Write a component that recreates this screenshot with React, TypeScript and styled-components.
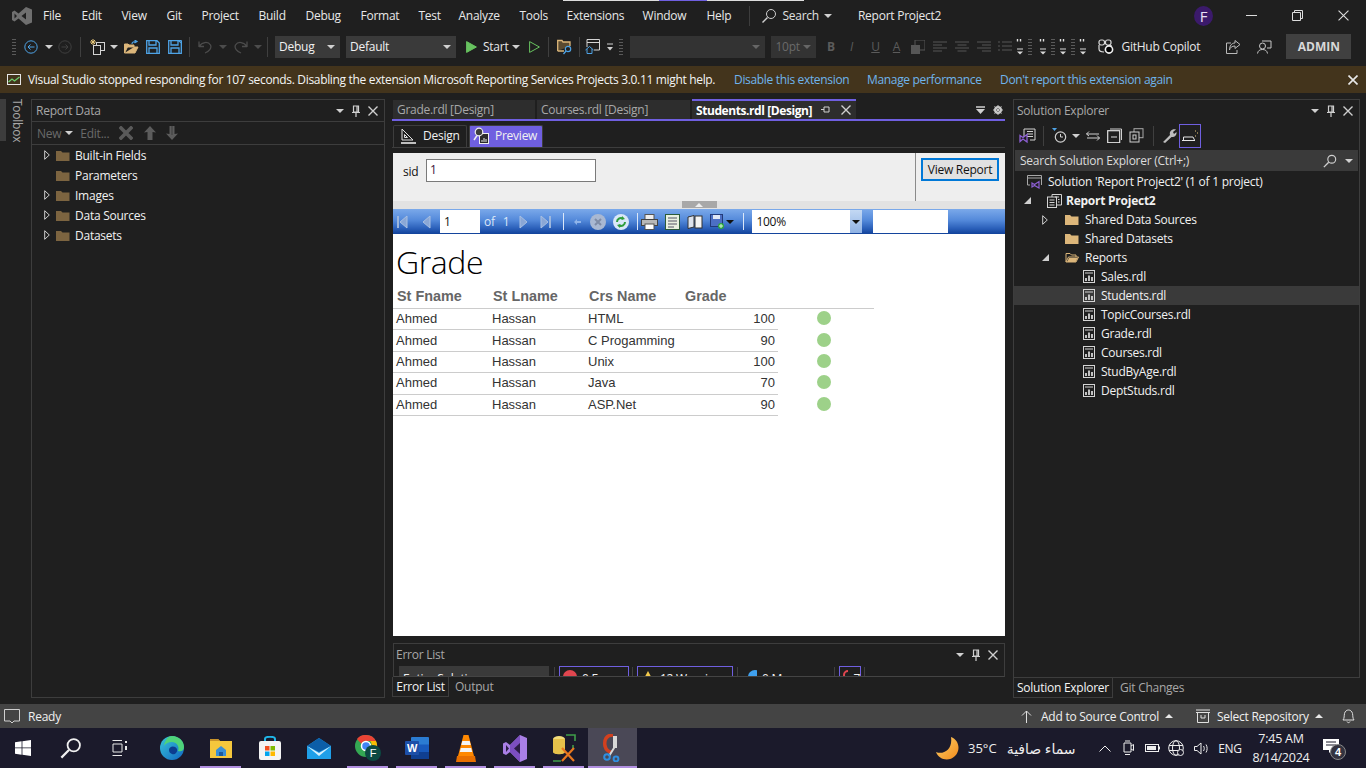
import React from 'react';
import styled, { createGlobalStyle } from 'styled-components';

const UI_FONT = `"Open Sans", "Noto Sans", "DejaVu Sans", sans-serif`;
const PANEL_LINE = '#3d3d3d';
const ACCENT = '#6f5fe0';

const GlobalStyle = createGlobalStyle`
    html, body { margin: 0; padding: 0; background: #1f1f1f; }
    * { box-sizing: border-box; }
    body { font-family: ${UI_FONT}; font-size: 12px; letter-spacing: -0.25px; color: #f1f1f1; }
`;

const Page = styled.div`
    width: 1366px;
    height: 768px;
    overflow: hidden;
    display: flex;
    flex-direction: column;
    position: relative;
    background: #1f1f1f;
`;

const GlitchStrip = styled.div`
    position: absolute;
    top: 0;
    left: 563px;
    width: 241px;
    height: 1px;
    background: linear-gradient(90deg, #ddd 0 96px, ${ACCENT} 96px 144px, #ddd 144px);
`;

/* generic fixed slot used by toolbars, centres whatever icon is in it */
const Slot = styled.div<{ $w: number; $ml?: number }>`
    width: ${p => p.$w}px;
    margin-left: ${p => p.$ml ?? 0}px;
    flex: none;
    display: flex;
    align-items: center;
    justify-content: center;
`;

/* title bar */
const TitleBar = styled.div`
    height: 31px;
    flex: none;
    display: flex;
    align-items: center;
`;

const LogoSlot = styled.div`
    width: 44px;
    padding-left: 12px;
    display: flex;
    align-items: center;
`;

const MenuItem = styled.div<{ $w: number }>`
    width: ${p => p.$w}px;
    margin-right: 20px;
    flex: none;
    text-align: center;
    white-space: nowrap;
    color: #e8e8e8;
`;

const TitleDivider = styled.div`
    width: 1px;
    height: 20px;
    margin: 0 9px 0 -2px;
    background: #3d3d3d;
`;

const SearchLabel = styled.span`
    margin: 0 2px 0 3px;
    color: #e0e0e0;
`;

const ProjectName = styled.div`
    margin-left: 23px;
    width: 250px;
    white-space: nowrap;
    color: #e8e8e8;
`;

const Avatar = styled.div`
    width: 20px;
    height: 20px;
    margin-left: 98px;
    border-radius: 50%;
    background: #3b1a6b;
    color: #e8e0f4;
    font-size: 15px;
    line-height: 20px;
    text-align: center;
`;

const WindowButtons = styled.div`
    margin-left: 15px;
    display: flex;
`;

/* toolbar */
const ToolBar = styled.div`
    height: 35px;
    padding: 0 0 4px 12px;
    flex: none;
    display: flex;
    align-items: center;
`;

const Grip = styled.div`
    width: 4px;
    height: 17px;
    flex: none;
    background-image: radial-gradient(#5a5a5a 0.7px, transparent 0.8px);
    background-size: 2px 3px;
`;

const Separator = styled.div`
    width: 1px;
    height: 20px;
    background: #3f3f3f;
`;

const Combo = styled.div<{ $w: number; $ml: number; $dim?: boolean }>`
    width: ${p => p.$w}px;
    margin-left: ${p => p.$ml}px;
    height: 22px;
    padding: 0 5px 0 4px;
    flex: none;
    display: flex;
    align-items: center;
    justify-content: space-between;
    background: ${p => (p.$dim ? '#333' : '#3a3a3a')};
    color: ${p => (p.$dim ? '#6a6a6a' : '#f1f1f1')};
`;

const FormatLetter = styled.span<{ $bold?: boolean; $italic?: boolean; $under?: boolean }>`
    color: #5b5b5b;
    font-weight: ${p => (p.$bold ? 700 : 400)};
    font-style: ${p => (p.$italic ? 'italic' : 'normal')};
    text-decoration: ${p => (p.$under ? 'underline' : 'none')};
`;

const ToolText = styled.span<{ $ml?: number; $tone?: string }>`
    margin-left: ${p => p.$ml ?? 0}px;
    white-space: nowrap;
    color: ${p => p.$tone ?? '#e8e8e8'};
`;

const AdminButton = styled.div`
    width: 65px;
    height: 25px;
    margin-left: 12px;
    background: #404040;
    color: #d8d8d8;
    font-weight: 700;
    text-align: center;
    line-height: 25px;
    letter-spacing: 0;
`;

/* info bar */
const InfoBar = styled.div`
    height: 27px;
    padding-left: 7px;
    flex: none;
    display: flex;
    align-items: center;
    background: #43341c;
    letter-spacing: -0.33px;
`;

const InfoText = styled.div`
    width: 706px;
    margin-left: 7px;
    white-space: nowrap;
    color: #f4f4f4;
`;

const InfoLink = styled.div<{ $w: number }>`
    width: ${p => p.$w}px;
    white-space: nowrap;
    color: #6fb5ec;
`;

const InfoClose = styled.div`
    margin-left: 169px;
    display: flex;
`;

/* main area */
const Main = styled.div`
    flex: 1;
    min-height: 0;
    display: flex;
    padding: 6px 0 6px;
`;

const Rail = styled.div`
    width: 31px;
    flex: none;
    position: relative;
    display: flex;
`;

const RailMark = styled.div`
    width: 6px;
    height: 42px;
    background: #3d3d3d;
`;

const RailLabel = styled.div`
    margin-left: 3px;
    writing-mode: vertical-rl;
    color: #a8a8a8;
    height: 42px;
`;

const ToolPanel = styled.div<{ $w: number; $ml: number }>`
    width: ${p => p.$w}px;
    margin-left: ${p => p.$ml}px;
    flex: none;
    display: flex;
    flex-direction: column;
`;

const PanelBody = styled.div`
    flex: 1;
    min-height: 0;
    display: flex;
    flex-direction: column;
    border: 1px solid ${PANEL_LINE};
`;

const PanelTitle = styled.div<{ $left?: number }>`
    height: 21px;
    padding: 0 6px 0 ${p => p.$left ?? 4}px;
    flex: none;
    display: flex;
    align-items: center;
    justify-content: space-between;
    color: #a8a8a8;
`;

const PanelActions = styled.div<{ $gap?: number }>`
    display: flex;
    align-items: center;
    gap: ${p => p.$gap ?? 8}px;
`;

const DataToolbar = styled.div`
    height: 24px;
    padding-left: 5px;
    flex: none;
    display: flex;
    align-items: center;
    border-top: 1px solid ${PANEL_LINE};
    border-bottom: 1px solid ${PANEL_LINE};
    color: #6a6a6a;
`;

const TreeList = styled.div<{ $top: number }>`
    padding-top: ${p => p.$top}px;
`;

const DataRow = styled.div`
    height: 20px;
    padding-left: 8px;
    display: flex;
    align-items: center;
    color: #f1f1f1;
`;

const ExpandSlot = styled.div`
    width: 14px;
    display: flex;
    justify-content: center;
`;

const RowLabel = styled.span<{ $bold?: boolean; $ml?: number }>`
    margin-left: ${p => p.$ml ?? 6}px;
    white-space: nowrap;
    font-weight: ${p => (p.$bold ? 700 : 400)};
`;

/* center column */
const CenterColumn = styled.div`
    width: 613px;
    margin-left: 7px;
    flex: none;
    display: flex;
    flex-direction: column;
`;

const DocTabs = styled.div`
    height: 22px;
    flex: none;
    display: flex;
    align-items: flex-end;
    padding-left: 1px;
    border-bottom: 2px solid ${ACCENT};
    position: relative;
`;

const DocTab = styled.div<{ $w: number; $active?: boolean }>`
    width: ${p => p.$w}px;
    height: ${p => (p.$active ? 20 : 19)}px;
    margin-right: 2px;
    padding: 0 5px 0 4px;
    flex: none;
    display: flex;
    align-items: center;
    justify-content: space-between;
    white-space: nowrap;
    background: #2d2d2d;
    color: ${p => (p.$active ? '#fff' : '#a8a8a8')};
    font-weight: ${p => (p.$active ? 700 : 400)};
    letter-spacing: ${p => (p.$active ? -0.42 : -0.28)}px;
    border-top: ${p => (p.$active ? `2px solid ${ACCENT}` : 'none')};
`;

const DocTabTools = styled.div`
    margin-left: auto;
    padding-right: 2px;
    height: 19px;
    display: flex;
    align-items: center;
    gap: 8px;
`;

const ViewTabs = styled.div`
    height: 23px;
    margin-top: 4px;
    padding-left: 1px;
    flex: none;
    display: flex;
    gap: 2px;
    border-bottom: 1px solid #3d3d3d;
`;

const ViewTab = styled.div<{ $w: number; $pad: number; $gap: number; $active?: boolean }>`
    width: ${p => p.$w}px;
    padding: 0 0 2px ${p => p.$pad}px;
    display: flex;
    align-items: center;
    gap: ${p => p.$gap}px;
    color: #f1f1f1;
    background: ${p => (p.$active ? ACCENT : 'transparent')};
    border: 1px solid #3d3d3d;
    border-bottom: none;
    border-radius: 2px 2px 0 0;
`;

const ReportFrame = styled.div`
    height: 483px;
    margin: 5px 0 0 1px;
    flex: none;
    display: flex;
    flex-direction: column;
    background: #fff;
`;

const ParamBar = styled.div`
    height: 48px;
    flex: none;
    display: flex;
    background: #eeeeee;
    color: #111;
`;

const ParamFields = styled.div`
    width: 523px;
    padding: 6px 0 0 10px;
    display: flex;
    align-items: flex-start;
    border-right: 1px solid #8a8a8a;
`;

const ParamLabel = styled.span`
    margin-top: 4px;
    width: 23px;
`;

const ParamInput = styled.div`
    width: 170px;
    height: 23px;
    padding-left: 3px;
    border: 1px solid #7a7a7a;
    background: #fff;
    color: #40103a;
    line-height: 20px;
`;

const ViewReportButton = styled.div`
    width: 78px;
    height: 23px;
    margin: 5px 0 0 5px;
    border: 2px solid #0078d7;
    background: #e1e1e1;
    text-align: center;
    line-height: 19px;
    white-space: nowrap;
`;

const Splitter = styled.div`
    height: 8px;
    flex: none;
    display: flex;
    justify-content: center;
    background: #e2e2e2;
`;

const SplitterHandle = styled.div`
    width: 35px;
    height: 7px;
    background: #a8a8a8;
    display: flex;
    align-items: center;
    justify-content: center;
`;

const BlueBar = styled.div`
    height: 25px;
    flex: none;
    display: flex;
    align-items: center;
    padding-left: 4px;
    background: linear-gradient(180deg, #7ba9ea 0%, #5389da 45%, #2a5fb9 78%, #12429a 100%);
    color: #dbe7f8;
`;

const PageBox = styled.div<{ $w: number; $ml: number }>`
    width: ${p => p.$w}px;
    margin-left: ${p => p.$ml}px;
    height: 23px;
    padding-left: 4px;
    padding-right: 0;
    flex: none;
    display: flex;
    align-items: center;
    justify-content: space-between;
    background: #fff;
    color: #111;
`;

const ZoomArrow = styled.div`
    width: 12px;
    height: 23px;
    display: flex;
    align-items: center;
    justify-content: center;
    background: linear-gradient(180deg, #c3d8f3, #8fb2e4);
`;

const BlueDivider = styled.div`
    width: 1px;
    height: 17px;
    background: #dbe7f8;
`;

const ReportContent = styled.div`
    flex: 1;
    min-height: 0;
    color: #333;
    font-family: "Liberation Sans", Arial, sans-serif;
    letter-spacing: 0;
`;

const ReportTitle = styled.div`
    height: 46px;
    padding: 5px 0 0 3px;
    font-family: ${UI_FONT};
    font-size: 32px;
    font-weight: 300;
    line-height: 46px;
    letter-spacing: -0.4px;
    color: #000;
`;

const HeaderRow = styled.div`
    width: 481px;
    height: 29px;
    padding: 8px 0 0 4px;
    display: grid;
    grid-template-columns: repeat(4, 96px);
    border-bottom: 1px solid #ccc;
    font-size: 14.4px;
    font-weight: 700;
    color: #666;
`;

const DataLine = styled.div`
    display: flex;
    align-items: center;
`;

const DataCells = styled.div`
    width: 385px;
    height: 21.4px;
    padding: 0 3px 1px 3px;
    flex: none;
    display: grid;
    grid-template-columns: 96px 96px 96px 1fr;
    align-items: center;
    border-bottom: 1px solid #ccc;
    font-size: 13px;
`;

const GradeCell = styled.div`
    text-align: right;
`;

const StatusDot = styled.div`
    width: 14px;
    height: 14px;
    margin: -3px 0 0 39px;
    border-radius: 50%;
    background: #9dd189;
`;

const ErrorPanel = styled.div`
    height: 34px;
    margin: 7px 0 0 1px;
    flex: none;
    overflow: hidden;
    border: 1px solid ${PANEL_LINE};
    border-bottom-color: #444;
`;

const ErrorFilters = styled.div`
    height: 24px;
    padding-left: 5px;
    display: flex;
    align-items: flex-start;
`;

const ScopeBox = styled.div`
    width: 150px;
    height: 22px;
    padding: 4px 0 0 4px;
    margin-top: 1px;
    background: #3a3a3a;
`;

const ChipDivider = styled.div<{ $ml: number }>`
    width: 1px;
    height: 20px;
    margin: 2px 0 0 ${p => p.$ml}px;
    background: #3f3f3f;
`;

const FilterChip = styled.div<{ $w: number; $ml: number; $on?: boolean }>`
    width: ${p => p.$w}px;
    margin: 1px 0 0 ${p => p.$ml}px;
    height: 22px;
    padding: 3px 0 0 3px;
    display: flex;
    align-items: flex-start;
    gap: 5px;
    white-space: nowrap;
    border: 1px solid ${p => (p.$on ? ACCENT : 'transparent')};
`;

const BottomTabs = styled.div`
    height: 20px;
    flex: none;
    display: flex;
    align-items: flex-start;
`;

const BottomTab = styled.div<{ $w: number; $active?: boolean; $ml?: number }>`
    width: ${p => p.$w}px;
    height: 20px;
    margin-left: ${p => p.$ml ?? 0}px;
    padding-top: 1px;
    text-align: center;
    white-space: nowrap;
    color: ${p => (p.$active ? '#f4f4f4' : '#a8a8a8')};
    border: ${p => (p.$active ? `1px solid ${PANEL_LINE}` : 'none')};
    border-top: none;
`;

/* solution explorer */
const SolutionToolbar = styled.div`
    height: 29px;
    padding-left: 3px;
    flex: none;
    display: flex;
    align-items: center;
`;

const ActiveTool = styled.div`
    width: 22px;
    height: 24px;
    display: flex;
    align-items: center;
    justify-content: center;
    border: 1px solid ${ACCENT};
`;

const SolutionSearch = styled.div`
    height: 21px;
    margin: 0 1px;
    padding: 0 5px;
    flex: none;
    display: flex;
    align-items: center;
    justify-content: space-between;
    background: #3a3a3a;
    color: #dcdcdc;
`;

const SolutionRow = styled.div<{ $indent: number; $selected?: boolean }>`
    height: 19px;
    padding-left: ${p => p.$indent}px;
    display: flex;
    align-items: center;
    color: #f1f1f1;
    background: ${p => (p.$selected ? '#3a3a3a' : 'transparent')};
`;

const ArrowSlot = styled.div`
    width: 18px;
    display: flex;
    justify-content: center;
`;

/* status bar */
const StatusBar = styled.div`
    height: 24px;
    flex: none;
    display: flex;
    align-items: center;
    padding-left: 4px;
    background: #444;
    color: #f0f0f0;
`;

const StatusText = styled.span<{ $ml: number; $w?: number }>`
    margin-left: ${p => p.$ml}px;
    width: ${p => (p.$w ? `${p.$w}px` : 'auto')};
    white-space: nowrap;
`;

/* taskbar */
const TaskBar = styled.div`
    height: 40px;
    flex: none;
    display: flex;
    align-items: stretch;
    background: #1b1a2b;
    color: #eee;
`;

const TaskButton = styled.div<{ $w: number; $open?: boolean; $active?: boolean; $nudge?: number }>`
    width: ${p => p.$w}px;
    padding-right: ${p => p.$nudge ?? 0}px;
    flex: none;
    position: relative;
    display: flex;
    align-items: center;
    justify-content: center;
    background: ${p => (p.$active ? '#4a4856' : 'transparent')};
    &::after {
        content: '';
        display: ${p => (p.$open ? 'block' : 'none')};
        position: absolute;
        left: ${p => (p.$active ? 0 : 4)}px;
        right: ${p => (p.$active ? 0 : 4)}px;
        bottom: 0;
        height: 2px;
        background: #b18fe0;
    }
`;

const Weather = styled.div`
    margin-left: 299px;
    width: 150px;
    flex: none;
    display: flex;
    align-items: center;
`;

const WeatherText = styled.span<{ $ml: number; $arabic?: boolean }>`
    margin-left: ${p => p.$ml}px;
    white-space: nowrap;
    font-size: ${p => (p.$arabic ? 14 : 13)}px;
    letter-spacing: 0;
`;

const TrayClock = styled.div`
    width: 64px;
    margin-left: 4px;
    flex: none;
    text-align: center;
    font-size: 12.5px;
    line-height: 19px;
    align-self: center;
`;

const Stroke = styled.svg`
    display: block;
    flex: none;
    fill: none;
    stroke: currentColor;
`;

/* small icon set, all hand drawn against the reference */
const Caret = ({ color = '#d0d0d0', up = false }: { color?: string; up?: boolean }) => (
    <svg width="8" height="4" viewBox="0 0 8 4">
        <path d={up ? 'M0 4 L4 0 L8 4Z' : 'M0 0 L8 0 L4 4Z'} fill={color} />
    </svg>
);

const CloseX = ({ size = 9, color = '#cfcfcf', w = 1.4 }: { size?: number; color?: string; w?: number }) => (
    <svg width={size} height={size} viewBox="0 0 10 10">
        <path d="M0.5 0.5 L9.5 9.5 M9.5 0.5 L0.5 9.5" stroke={color} strokeWidth={w} />
    </svg>
);

const Pin = () => (
    <svg width="8" height="12" viewBox="0 0 8 12">
        <path d="M1.5 1 H6.5 V7 H1.5Z M5 1 V7 M0 7.5 H8 M4 8 V12" stroke="#d0d0d0" strokeWidth="1.2" fill="none" />
    </svg>
);

const PanelControls = () => (
    <PanelActions>
        <Caret />
        <Pin />
        <CloseX size={10} />
    </PanelActions>
);

const Expand = () => (
    <svg width="6" height="10" viewBox="0 0 6 10">
        <path d="M0.7 0.7 L5.3 5 L0.7 9.3Z" stroke="#cfcfcf" fill="none" />
    </svg>
);

const Collapse = () => (
    <svg width="7" height="7" viewBox="0 0 7 7">
        <path d="M7 0 V7 H0Z" fill="#cfcfcf" />
    </svg>
);

const Folder = ({ color = '#7c6440', open = false }: { color?: string; open?: boolean }) => (
    <svg width="14" height="11" viewBox="0 0 14 11">
        {open ? (
            <path d="M1 10 V1.5 H5 L6.5 3 H11 V5 M1 10 L3.5 5 H13.5 L11 10Z" stroke={color} strokeWidth="1" fill="none" />
        ) : (
            <path d="M0 1 H5 L6.5 2.5 H13.5 V11 H0Z" fill={color} />
        )}
        {open && <path d="M2 10 L4 6 H12.7 L10.6 10Z" fill={color} />}
    </svg>
);

const ReportFile = () => (
    <svg width="12" height="13" viewBox="0 0 12 13">
        <rect x="0.5" y="0.5" width="11" height="12" stroke="#d4d4d4" fill="none" />
        <path d="M2 3 H10" stroke="#d4d4d4" />
        <path d="M3 11 V8 M6 11 V5.5 M9 11 V7" stroke="#d4d4d4" strokeWidth="1.8" />
    </svg>
);

const NavCircle = ({ color, dim }: { color: string; dim?: boolean }) => (
    <svg width="14" height="14" viewBox="0 0 14 14" opacity={dim ? 0.9 : 1}>
        <circle cx="7" cy="7" r="6.2" stroke={color} fill="none" />
        <path d={dim ? 'M3.5 7 H10 M7.5 4.5 L10 7 L7.5 9.5' : 'M10.5 7 H4 M6.5 4.5 L4 7 L6.5 9.5'} stroke={color} fill="none" />
    </svg>
);

const NewProject = () => (
    <svg width="16" height="16" viewBox="0 0 16 16">
        <rect x="6.5" y="3.5" width="8" height="8" stroke="#d4d4d4" fill="none" />
        <rect x="3.5" y="6.5" width="7" height="9" stroke="#d4d4d4" fill="#1f1f1f" />
        <path d="M3 0 V6 M0 3 H6 M1 1 L5 5 M5 1 L1 5" stroke="#e6c67a" strokeWidth="1" />
    </svg>
);

const OpenFolder = () => (
    <svg width="15" height="14" viewBox="0 0 15 14">
        <path d="M0.5 13 V4 H4 L5 5 H10 V7 M0.5 13 H11 L14 7 H3.5Z" fill="#dcb67a" stroke="#dcb67a" strokeLinejoin="round" />
        <path d="M8 4 C8 2 10 1.5 12 1.5 M10.5 0 L13 1.5 L10.5 3" stroke="#4ea3e6" strokeWidth="1.2" fill="none" />
    </svg>
);

const SaveIcon = ({ double = false }: { double?: boolean }) => (
    <svg width="14" height="14" viewBox="0 0 14 14">
        {double && <path d="M3 0.5 H13.5 V11" stroke="#4ea3e6" fill="none" />}
        <path d="M0.7 0.7 H11 L13.3 3 V13.3 H0.7Z M3 1 V5 H10 V1 M3 13 V8 H11 V13" stroke="#4ea3e6" strokeWidth="1.3" fill="none" />
    </svg>
);

const UndoIcon = ({ flip = false }: { flip?: boolean }) => (
    <svg width="14" height="14" viewBox="0 0 14 14" style={flip ? { transform: 'scaleX(-1)' } : undefined}>
        <path d="M1 7 L1 1.5 M1 6.5 H6 M1.2 6.3 C4 2 10 1 12.5 5 C14 8 11 11.5 7 13" stroke="#4c4c4c" strokeWidth="1.3" fill="none" />
    </svg>
);

const PlayIcon = ({ hollow = false }: { hollow?: boolean }) => (
    <svg width="11" height="12" viewBox="0 0 11 12">
        <path d="M0.6 0.6 L10.4 6 L0.6 11.4Z" fill={hollow ? 'none' : '#67c25f'} stroke="#67c25f" />
    </svg>
);

const FolderSearch = () => (
    <svg width="16" height="16" viewBox="0 0 16 16">
        <path d="M0.7 12 V1.5 H5 L6 3 H13 V7 M0.7 12 H7" stroke="#dcb67a" strokeWidth="1.3" fill="#5a4a30" />
        <circle cx="11" cy="10" r="2.7" stroke="#4ea3e6" strokeWidth="1.2" fill="#1f1f1f" />
        <path d="M9 12 L6.5 15" stroke="#4ea3e6" strokeWidth="1.3" />
    </svg>
);

const HomeWindow = () => (
    <svg width="15" height="15" viewBox="0 0 15 15">
        <path d="M2 8 V0.5 H14.5 V11 H9 M2 3.5 H14.5" stroke="#d4d4d4" fill="none" />
        <path d="M0.5 11 L4.5 7.5 L8.5 11 M2 10 V14.5 H7 V10" stroke="#4ea3e6" fill="none" />
    </svg>
);

const AlignLines = ({ mode }: { mode: 'l' | 'c' | 'r' | 'n' }) => {
    const paths = {
        l: 'M0 1 H14 M0 4 H9 M0 7 H14 M0 10 H9',
        c: 'M0 1 H14 M2.5 4 H11.5 M0 7 H14 M2.5 10 H11.5',
        r: 'M0 1 H14 M5 4 H14 M0 7 H14 M5 10 H14',
        n: 'M4 1 H14 M4 5 H14 M4 9 H14 M0 1 H2 M0 5 H2 M0 9 H2',
    };
    return (
        <svg width="14" height="11" viewBox="0 0 14 11">
            <path d={paths[mode]} stroke="#565656" />
        </svg>
    );
};

const SpacingMark = () => (
    <svg width="8" height="17" viewBox="0 0 8 17">
        <path d="M1.5 1 V3.5 M4.5 1 V3.5" stroke="#e0e0e0" strokeWidth="1.4" />
        <path d="M1 11 H7" stroke="#d8d8d8" />
        <path d="M1 13.5 H7 L4 16.5Z" fill="#d8d8d8" />
    </svg>
);

const Copilot = () => (
    <svg width="16" height="15" viewBox="0 0 16 15">
        <rect x="1" y="1" width="5.5" height="5" rx="2" stroke="#dcdcdc" strokeWidth="1.2" fill="none" />
        <rect x="7.5" y="1" width="5.5" height="5" rx="2" stroke="#dcdcdc" strokeWidth="1.2" fill="none" />
        <path d="M1 6 V10 C1 12 3 13 6 13 M13 6 V7" stroke="#dcdcdc" strokeWidth="1.2" fill="none" />
        <circle cx="11" cy="10.5" r="3.6" stroke="#f0f0f0" strokeWidth="1.6" fill="#000" />
    </svg>
);

const ShareIcon = () => (
    <svg width="15" height="14" viewBox="0 0 15 14">
        <path d="M9 0.5 L14 4.5 L9 8.5 V6 C6 6 4 7.5 3.5 10 C3.5 6 5.5 3 9 3Z" stroke="#b9b9b9" fill="none" />
        <path d="M5 3 H0.5 V13.5 H11 V10" stroke="#b9b9b9" fill="none" />
    </svg>
);

const FeedbackIcon = () => (
    <svg width="15" height="14" viewBox="0 0 15 14">
        <circle cx="5.5" cy="6" r="3" stroke="#c8c8c8" fill="none" />
        <path d="M0.5 13.5 C1 10.5 3 9.5 5.5 9.5 C8 9.5 10 10.5 10.5 13.5" stroke="#c8c8c8" fill="none" />
        <path d="M5 1 H14 V8 H10" stroke="#c8c8c8" fill="none" />
    </svg>
);

const Magnifier = ({ size = 16, color = '#cfcfcf' }: { size?: number; color?: string }) => (
    <svg width={size} height={size} viewBox="0 0 16 16">
        <circle cx="10" cy="6" r="4.5" stroke={color} strokeWidth="1.3" fill="none" />
        <path d="M6.5 9.5 L1 15" stroke={color} strokeWidth="1.6" />
    </svg>
);

const VsLogo = () => (
    <svg width="20" height="20" viewBox="0 0 20 20">
        <path d="M14 1 L20 3.5 V16.5 L14 19 L6.5 12.5 L2.5 15.5 L0 14 V6 L2.5 4.5 L6.5 7.5Z M14 6.5 L9.5 10 L14 13.5Z M2.5 7.5 V12.5 L5 10Z" fill="#6f6f6f" fillRule="evenodd" />
    </svg>
);

const ChartLine = () => (
    <svg width="14" height="11" viewBox="0 0 14 11">
        <rect x="0.5" y="0.5" width="13" height="10" stroke="#e6e6e6" fill="none" />
        <path d="M1.5 8 L5 5 L7.5 7 L12.5 3" stroke="#6fcf6f" strokeWidth="1.3" fill="none" />
    </svg>
);

const DesignIcon = () => (
    <svg width="15" height="16" viewBox="0 0 15 16">
        <path d="M1 1 V12 H12Z M3.5 6.5 V9.5 H6.5Z" stroke="#e0e0e0" fill="none" />
        <path d="M0 14 H15 V16 H0Z" fill="#c0c0c0" />
    </svg>
);

const PreviewIcon = () => (
    <svg width="16" height="18" viewBox="0 0 16 18">
        <rect x="6.5" y="6.5" width="9" height="10" stroke="#eee" fill="#2b2b2b" />
        <circle cx="6" cy="5" r="3.8" stroke="#eee" strokeWidth="1.2" fill="#3c3c3c" />
        <path d="M4 8.5 L1 13" stroke="#eee" strokeWidth="1.5" />
        <path d="M9 15 V13 M11 15 V11 M13 15 V12" stroke="#eee" />
    </svg>
);

const MoveArrow = ({ down = false }: { down?: boolean }) => (
    <svg width="12" height="14" viewBox="0 0 12 14" style={down ? { transform: 'scaleY(-1)' } : undefined}>
        <path d="M6 0 L12 6.5 L8.5 6 V14 H3.5 V6 L0 6.5Z" fill="#5c5c5c" />
        <path d="M6 5 V14" stroke="#3c3c3c" strokeWidth={down ? 1 : 0} />
    </svg>
);

const VsProjectIcon = () => (
    <svg width="18" height="16" viewBox="0 0 18 16">
        <path d="M5 9 V1 H16 V12 H11 M8 3.5 H14 M8 6 H14 M8 8.5 H14" stroke="#d4d4d4" fill="none" />
        <path d="M1 7.5 L4 9.5 L8 6.5 V14 L4 11 L1 13.5Z" stroke="#8d5fd3" strokeWidth="1.3" fill="none" />
    </svg>
);

const SolutionIcon = () => (
    <svg width="15" height="14" viewBox="0 0 15 14">
        <path d="M3 10 H0.5 V0.5 H14.5 V10 M0.5 3 H14.5" stroke="#a8a8a8" fill="none" />
        <path d="M5 8 L7.5 9.5 L12 6.5 V13 L7.5 10.5 L5 12Z" stroke="#8d5fd3" strokeWidth="1.2" fill="none" />
    </svg>
);

const ProjectIcon = () => (
    <svg width="15" height="14" viewBox="0 0 15 14">
        <rect x="0.5" y="3" width="9" height="10.5" stroke="#d4d4d4" fill="none" />
        <path d="M5 3 V0.5 H14.5 V11 H10 M2.5 6 H7.5 M2.5 8.5 H7.5 M2.5 11 H7.5 M8 3 H12 M11 5.5 H12.5 M11 8 H12.5" stroke="#d4d4d4" fill="none" />
    </svg>
);

const HistoryIcon = () => (
    <svg width="15" height="15" viewBox="0 0 15 15">
        <circle cx="8.5" cy="9" r="5.2" stroke="#d0d0d0" strokeWidth="1.2" fill="none" />
        <path d="M8.5 6 V9 H11" stroke="#d0d0d0" fill="none" />
        <path d="M0 0 H5 L2.5 3Z" fill="#4ea3e6" />
    </svg>
);

const SyncIcon = () => (
    <svg width="14" height="10" viewBox="0 0 14 10">
        <path d="M0.5 3 H13 M3 0.5 L0.5 3 L3 5 M13.5 7 H1 M11 4.5 L13.5 7 L11 9.5" stroke="#d0d0d0" fill="none" />
    </svg>
);

const CollapseAll = () => (
    <svg width="15" height="15" viewBox="0 0 15 15">
        <path d="M3 1 H14.5 V12" stroke="#d0d0d0" fill="none" />
        <rect x="0.7" y="2.7" width="12" height="12" stroke="#e0e0e0" strokeWidth="1.2" fill="none" />
        <path d="M4 9 H10" stroke="#e0e0e0" />
    </svg>
);

const CopyStack = () => (
    <svg width="15" height="15" viewBox="0 0 15 15">
        <rect x="5" y="0.7" width="9" height="9" stroke="#aaa" fill="none" />
        <rect x="1" y="4" width="9" height="10" stroke="#d0d0d0" fill="#1f1f1f" />
        <rect x="4" y="7" width="3" height="4" stroke="#d0d0d0" fill="none" />
    </svg>
);

const Wrench = () => (
    <svg width="15" height="15" viewBox="0 0 15 15">
        <path d="M1 14 L8 7 C7 3.5 10 0.5 14 1.5 L11 4 L12 6 L14.5 4 C15 8 11.5 9.5 9.5 9 L3 15Z" fill="#bdbdbd" />
    </svg>
);

const PreviewTool = () => (
    <svg width="17" height="12" viewBox="0 0 17 12">
        <path d="M0 10.5 H13 M1.5 10 V7 H11 L12.5 10" stroke="#e6e6e6" fill="none" />
        <path d="M13 6 H14 M15 3 H16 M13 1 H14" stroke="#e6c67a" fill="none" />
    </svg>
);

const ReportNav = ({ dir, last }: { dir: 'l' | 'r'; last?: boolean }) => (
    <svg width="11" height="14" viewBox="0 0 11 14" style={dir === 'r' ? { transform: 'scaleX(-1)' } : undefined}>
        {last && <rect x="0" y="1" width="2" height="12" fill="#9db7dd" />}
        <path d="M10 1 L3 7 L10 13Z" fill="#8aa7d6" stroke="#a9c0e2" />
    </svg>
);

const StopButton = () => (
    <svg width="16" height="16" viewBox="0 0 16 16">
        <circle cx="8" cy="8" r="8" fill="#a9b8d2" />
        <path d="M5 5 L11 11 M11 5 L5 11" stroke="#7f8ca6" strokeWidth="2" />
    </svg>
);

const RefreshButton = () => (
    <svg width="16" height="16" viewBox="0 0 16 16">
        <circle cx="8" cy="8" r="8" fill="#d9e7f8" />
        <path d="M4 8 C4 5 7 3 10 4.5 M12 8 C12 11 9 13 6 11.5" stroke="#2f9d3d" strokeWidth="2" fill="none" />
        <path d="M9 2 L12 5 L8.5 6Z M7 14 L4 11 L7.5 10Z" fill="#2f9d3d" />
    </svg>
);

const PrintButton = () => (
    <svg width="17" height="16" viewBox="0 0 17 16">
        <rect x="4" y="0.5" width="9" height="5" fill="#eee" stroke="#555" />
        <rect x="0.5" y="5.5" width="16" height="6" fill="#b8b8b8" stroke="#444" />
        <rect x="4" y="10" width="9" height="5.5" fill="#fff" stroke="#555" />
    </svg>
);

const PageLayout = () => (
    <svg width="15" height="16" viewBox="0 0 15 16">
        <rect x="0.5" y="0.5" width="14" height="15" fill="#e8f0e0" stroke="#2b5a3a" />
        <path d="M3 4 H12 M3 7 H12 M3 10 H12 M3 13 H9" stroke="#556" />
    </svg>
);

const PageSetup = () => (
    <svg width="16" height="14" viewBox="0 0 16 14">
        <path d="M1 2 L7 0.5 V12 L1 13.5Z" fill="#dde3ee" stroke="#333" />
        <rect x="8" y="1" width="7" height="12" fill="#f4f4f4" stroke="#333" />
    </svg>
);

const ExportDisk = () => (
    <svg width="15" height="16" viewBox="0 0 15 16">
        <rect x="0.5" y="0.5" width="12" height="12" fill="#4c6fc4" stroke="#223a7a" />
        <rect x="3" y="1" width="7" height="4" fill="#dfe7f6" />
        <circle cx="11" cy="12" r="3" fill="#2ea83f" />
        <path d="M9 12 H13 M11 10 V14" stroke="#d6f5d9" />
    </svg>
);

const WinLogo = () => (
    <svg width="16" height="16" viewBox="0 0 16 16">
        <path d="M0 2.2 L6.6 1.3 V7.5 H0Z M7.4 1.2 L16 0 V7.5 H7.4Z M0 8.3 H6.6 V14.7 L0 13.8Z M7.4 8.3 H16 V16 L7.4 14.8Z" fill="#fff" />
    </svg>
);

const TaskView = () => (
    <svg width="16" height="16" viewBox="0 0 16 16">
        <path d="M0.5 0.5 H10 M0.5 15.5 H10 M1 4 H10 V12 H1Z" stroke="#e8e8e8" fill="none" />
        <path d="M14 1 V3 M14 6 V10" stroke="#e8e8e8" strokeWidth="2" />
    </svg>
);

const EdgeIcon = () => (
    <svg width="24" height="24" viewBox="0 0 24 24">
        <defs>
            <linearGradient id="edgeA" x1="0" y1="0" x2="1" y2="1">
                <stop offset="0" stopColor="#38c6d8" />
                <stop offset="1" stopColor="#1166c2" />
            </linearGradient>
        </defs>
        <circle cx="12" cy="12" r="12" fill="url(#edgeA)" />
        <path d="M12 0 C19 0 24 5 24 11 C24 15 21 16 18 15 C20 10 16 6 12 6 C8 6 5 8 4 10 C5 4 8 0 12 0Z" fill="#4fd37a" />
        <path d="M9 14 C9 10 15 9 17 13 C18 17 14 19 12 18 C10 17 9 16 9 14Z" fill="#0c3d8f" />
    </svg>
);

const ExplorerIcon = () => (
    <svg width="22" height="20" viewBox="0 0 22 20">
        <path d="M0 1 H8 L10 3 H22 V20 H0Z" fill="#f5c73d" />
        <path d="M0 1 H8 L10 3 H0Z" fill="#c9932a" />
        <path d="M6 12 L11 8 L16 12 V18 H6Z" fill="#3a8fd6" />
        <path d="M9 14 H13 V18 H9Z" fill="#1b5a9e" />
    </svg>
);

const StoreIcon = () => (
    <svg width="22" height="24" viewBox="0 0 22 24">
        <path d="M6 6 V3 C6 0 16 0 16 3 V6" stroke="#1fb5e8" strokeWidth="2" fill="none" />
        <rect x="0" y="5" width="22" height="19" rx="2" fill="#f4f4f4" />
        <rect x="6" y="10" width="4.5" height="4.5" fill="#f25022" />
        <rect x="11.5" y="10" width="4.5" height="4.5" fill="#7fba00" />
        <rect x="6" y="15.5" width="4.5" height="4.5" fill="#00a4ef" />
        <rect x="11.5" y="15.5" width="4.5" height="4.5" fill="#ffb900" />
    </svg>
);

const MailIcon = () => (
    <svg width="24" height="21" viewBox="0 0 24 21">
        <path d="M12 0 L24 8 V21 H0 V8Z" fill="#1f9fe8" />
        <path d="M12 0 L24 8 L12 14 L0 8Z" fill="#0c5ea8" />
        <path d="M0 8 L12 15 L24 8 L12 18Z" fill="#d8f0fc" />
    </svg>
);

const ChromeIcon = () => (
    <svg width="26" height="26" viewBox="0 0 26 26">
        <circle cx="11" cy="11" r="11" fill="#34a853" />
        <path d="M11 0 A11 11 0 0 1 21 6 H11 A5 5 0 0 0 6.5 9 L2 4 A11 11 0 0 1 11 0Z" fill="#ea4335" />
        <path d="M21 6 A11 11 0 0 1 14 21.6 L15.5 13 A5 5 0 0 0 15 6Z" fill="#fbbc05" />
        <circle cx="11" cy="11" r="4.5" fill="#4285f4" stroke="#fff" strokeWidth="1.5" />
        <circle cx="18" cy="18" r="8" fill="#0c4a42" />
        <text x="18" y="22" textAnchor="middle" fontSize="11" fontFamily="Liberation Sans" fill="#fff">F</text>
    </svg>
);

const WordIcon = () => (
    <svg width="24" height="24" viewBox="0 0 24 24">
        <rect x="6" y="1" width="18" height="22" rx="1" fill="#2b7cd3" />
        <rect x="6" y="16" width="18" height="7" fill="#103f91" />
        <rect x="6" y="8.5" width="18" height="7.5" fill="#185abd" />
        <rect x="0" y="5" width="14" height="14" rx="1" fill="#1d4fa8" />
        <text x="7" y="16" textAnchor="middle" fontSize="11" fontWeight="700" fontFamily="Liberation Sans" fill="#fff">W</text>
    </svg>
);

const VlcIcon = () => (
    <svg width="20" height="27" viewBox="0 0 20 27">
        <path d="M7.5 0 H12.5 L18 21 H2Z" fill="#ff8800" />
        <path d="M6.3 6 H13.7 L14.7 10 H5.3Z M4.8 13 H15.2 L16.2 17 H3.8Z" fill="#f4f4f4" />
        <path d="M1 21 H19 L20 27 H0Z" fill="#e86f00" />
    </svg>
);

const VsIcon = () => (
    <svg width="24" height="27" viewBox="0 0 24 27">
        <path d="M17 0 L24 3 V24 L17 27 L7 17 L3 20 L0 18.5 V8.5 L3 7 L7 10Z" fill="#a97fe6" />
        <path d="M17 0 L17 27 L7 17 V10Z" fill="#7c4fc0" />
        <path d="M17 8 L11 13.5 L17 19Z" fill="#2b1d45" />
        <path d="M3 10 V17 L6 13.5Z" fill="#2b1d45" />
    </svg>
);

const ToolIcon = () => (
    <svg width="24" height="28" viewBox="0 0 24 28">
        <ellipse cx="7" cy="5" rx="6" ry="3" fill="#f2dc7a" />
        <path d="M1 5 V18 C1 21 13 21 13 18 V5Z" fill="#e6c14a" />
        <path d="M14 1 H23 V7 M1 27 H9 M21 11 V15" stroke="#3f9d4a" strokeWidth="1.6" fill="none" />
        <path d="M10 14 L22 27 M22 14 L10 27" stroke="#e8771f" strokeWidth="2.2" />
    </svg>
);

const SnipIcon = () => (
    <svg width="20" height="28" viewBox="0 0 20 28">
        <path d="M10 1 C3 1 1 6 2 12 C3 16 6 18 8 18" stroke="#d2401f" strokeWidth="3.5" fill="none" />
        <path d="M11 2 V14 L6 22 M13 2 V14" stroke="#d8d8d8" strokeWidth="2" fill="none" />
        <circle cx="4" cy="23" r="2.8" stroke="#2f8fe0" strokeWidth="2" fill="none" />
        <circle cx="13" cy="25" r="2.4" stroke="#2f8fe0" strokeWidth="2" fill="none" />
    </svg>
);

const Moon = () => (
    <svg width="23" height="23" viewBox="0 0 23 23">
        <defs>
            <linearGradient id="moonA" x1="0" y1="0" x2="1" y2="1">
                <stop offset="0" stopColor="#ffd36a" />
                <stop offset="1" stopColor="#f08a1c" />
            </linearGradient>
        </defs>
        <path d="M15 0 C23 3 25 13 19 19 C13 25 3 23 0 15 C7 18 17 13 15 0Z" fill="url(#moonA)" />
    </svg>
);

const NotifyIcon = () => (
    <svg width="24" height="24" viewBox="0 0 24 24">
        <path d="M0 3 H16 V14 H9 L6 17 V14 H0Z" fill="#fff" />
        <path d="M3 6 H13 M3 9 H13" stroke="#1b1a2b" />
        <circle cx="15" cy="16" r="7.5" fill="#33323f" stroke="#888" />
        <text x="15" y="20" textAnchor="middle" fontSize="11" fontWeight="700" fontFamily="Liberation Sans" fill="#fff">4</text>
    </svg>
);

const MENU: [string, number][] = [
    ['File', 19], ['Edit', 20], ['View', 25], ['Git', 15], ['Project', 37], ['Build', 27], ['Debug', 35],
    ['Format', 38], ['Test', 20], ['Analyze', 41], ['Tools', 27], ['Extensions', 56], ['Window', 44], ['Help', 25],
];

const DATA_NODES: [string, boolean][] = [
    ['Built-in Fields', true], ['Parameters', false], ['Images', true], ['Data Sources', true], ['Datasets', true],
];

const REPORT_FILES = ['Sales.rdl', 'Students.rdl', 'TopicCourses.rdl', 'Grade.rdl', 'Courses.rdl', 'StudByAge.rdl', 'DeptStuds.rdl'];

const GRADES: [string, string][] = [
    ['HTML', '100'], ['C Progamming', '90'], ['Unix', '100'], ['Java', '70'], ['ASP.Net', '90'],
];

const App = () => (
    <Page>
        <GlobalStyle />
        <GlitchStrip />
        <TitleBar>
            <LogoSlot><VsLogo /></LogoSlot>
            {MENU.map(([label, w]) => <MenuItem key={label} $w={w}>{label}</MenuItem>)}
            <TitleDivider />
            <Slot $w={20}><Stroke width="16" height="16" viewBox="0 0 16 16" color="#cfcfcf"><circle cx="10" cy="6" r="4.5" /><path d="M6.5 9.5 L1.5 14.5" strokeWidth="1.5" /></Stroke></Slot>
            <SearchLabel>Search</SearchLabel>
            <Slot $w={14}><Caret /></Slot>
            <ProjectName>Report Project2</ProjectName>
            <Avatar>F</Avatar>
            <WindowButtons>
                <Slot $w={46}><svg width="11" height="1"><rect width="11" height="1" fill="#ddd" /></svg></Slot>
                <Slot $w={46}><svg width="11" height="11" viewBox="0 0 11 11"><path d="M0.5 2.5 H8.5 V10.5 H0.5Z M2.5 2.5 V0.5 H10.5 V8.5 H8.5" stroke="#ddd" fill="none" /></svg></Slot>
                <Slot $w={46}><CloseX size={11} color="#ddd" w={1} /></Slot>
            </WindowButtons>
        </TitleBar>

        <ToolBar>
            <Grip />
            <Slot $w={18} $ml={6}><NavCircle color="#4ea3e6" /></Slot>
            <Slot $w={18}><Caret /></Slot>
            <Slot $w={14}><NavCircle color="#444" dim /></Slot>
            <Slot $w={16}><Separator /></Slot>
            <Slot $w={19}><NewProject /></Slot>
            <Slot $w={14}><Caret /></Slot>
            <Slot $w={20}><OpenFolder /></Slot>
            <Slot $w={23}><SaveIcon /></Slot>
            <Slot $w={22}><SaveIcon double /></Slot>
            <Slot $w={6}><Separator /></Slot>
            <Slot $w={26}><UndoIcon /></Slot>
            <Slot $w={10}><Caret color="#4c4c4c" /></Slot>
            <Slot $w={26}><UndoIcon flip /></Slot>
            <Slot $w={8}><Caret color="#4c4c4c" /></Slot>
            <Slot $w={10}><Separator /></Slot>
            <Combo $w={65} $ml={3}>Debug<Caret /></Combo>
            <Combo $w={110} $ml={6}>Default<Caret /></Combo>
            <Slot $w={22} $ml={4}><PlayIcon /></Slot>
            <ToolText $ml={1}>Start</ToolText>
            <Slot $w={14} $ml={1}><Caret /></Slot>
            <Slot $w={22}><PlayIcon hollow /></Slot>
            <Slot $w={6}><Separator /></Slot>
            <Slot $w={27}><FolderSearch /></Slot>
            <Slot $w={2}><Separator /></Slot>
            <Slot $w={26} $ml={-1}><HomeWindow /></Slot>
            <Slot $w={10}><svg width="8" height="8" viewBox="0 0 8 8"><path d="M1 1 H7" stroke="#d0d0d0" /><path d="M1 4 H7 L4 7.5Z" fill="#d0d0d0" /></svg></Slot>
            <Slot $w={4} $ml={4}><Grip /></Slot>
            <Combo $w={135} $ml={7} $dim><span /><Caret color="#666" /></Combo>
            <Combo $w={45} $ml={6} $dim>10pt<Caret color="#666" /></Combo>
            <Slot $w={29}><FormatLetter $bold>B</FormatLetter></Slot>
            <Slot $w={12}><FormatLetter $italic>I</FormatLetter></Slot>
            <Slot $w={24} $ml={6}><FormatLetter $under>U</FormatLetter></Slot>
            <Slot $w={18}><FormatLetter $under>A</FormatLetter></Slot>
            <Slot $w={25}><svg width="14" height="14" viewBox="0 0 14 14"><rect x="4" y="0" width="10" height="10" stroke="#565656" fill="none" /><rect x="0" y="5" width="9" height="9" fill="#565656" /></svg></Slot>
            <Slot $w={20}><AlignLines mode="l" /></Slot>
            <Slot $w={22} $ml={1}><AlignLines mode="c" /></Slot>
            <Slot $w={22}><AlignLines mode="r" /></Slot>
            <Slot $w={20}><AlignLines mode="n" /></Slot>
            <Slot $w={10}><SpacingMark /></Slot>
            <Slot $w={10}><Grip /></Slot>
            <Slot $w={12} $ml={2}><SpacingMark /></Slot>
            <Slot $w={8}><Grip /></Slot>
            <Slot $w={12}><SpacingMark /></Slot>
            <Slot $w={8}><Grip /></Slot>
            <Slot $w={12}><SpacingMark /></Slot>
            <Slot $w={20} $ml={7}><Copilot /></Slot>
            <ToolText $ml={5}>GitHub Copilot</ToolText>
            <Slot $w={20} $ml={23}><ShareIcon /></Slot>
            <Slot $w={20} $ml={11}><FeedbackIcon /></Slot>
            <AdminButton>ADMIN</AdminButton>
        </ToolBar>

        <InfoBar>
            <ChartLine />
            <InfoText>Visual Studio stopped responding for 107 seconds. Disabling the extension Microsoft Reporting Services Projects 3.0.11 might help.</InfoText>
            <InfoLink $w={133}>Disable this extension</InfoLink>
            <InfoLink $w={133}>Manage performance</InfoLink>
            <InfoLink $w={179}>Don't report this extension again</InfoLink>
            <InfoClose><CloseX size={10} color="#e8e8e8" w={1.6} /></InfoClose>
        </InfoBar>

        <Main>
            <Rail>
                <RailMark />
                <RailLabel>Toolbox</RailLabel>
            </Rail>

            <ToolPanel $w={354} $ml={0}>
                <PanelBody>
                    <PanelTitle>Report Data<PanelControls /></PanelTitle>
                    <DataToolbar>
                        New
                        <Slot $w={16}><Caret /></Slot>
                        <ToolText $ml={3} $tone="#6a6a6a">Edit...</ToolText>
                        <Slot $w={20} $ml={7}><CloseX size={14} color="#5a5a5a" w={2.6} /></Slot>
                        <Slot $w={16} $ml={6}><MoveArrow /></Slot>
                        <Slot $w={16} $ml={6}><MoveArrow down /></Slot>
                    </DataToolbar>
                    <TreeList $top={0}>
                        {DATA_NODES.map(([label, arrow]) => (
                            <DataRow key={label}>
                                <ExpandSlot>{arrow ? <Expand /> : null}</ExpandSlot>
                                <Slot $w={14} $ml={2}><Folder /></Slot>
                                <RowLabel $ml={5}>{label}</RowLabel>
                            </DataRow>
                        ))}
                    </TreeList>
                </PanelBody>
            </ToolPanel>

            <CenterColumn>
                <DocTabs>
                    <DocTab $w={142}>Grade.rdl [Design]</DocTab>
                    <DocTab $w={153}>Courses.rdl [Design]</DocTab>
                    <DocTab $w={164} $active>
                        Students.rdl [Design]
                        <PanelActions $gap={10}>
                            <svg width="10" height="8" viewBox="0 0 10 8"><path d="M3 1 H8 V6 H3Z M0 3.5 H3" stroke="#d0d0d0" fill="none" /></svg>
                            <CloseX size={10} />
                        </PanelActions>
                    </DocTab>
                    <DocTabTools>
                        <svg width="9" height="8" viewBox="0 0 9 8"><path d="M0 1 H9" stroke="#d0d0d0" strokeWidth="1.5" /><path d="M0 3 H9 L4.5 8Z" fill="#d0d0d0" /></svg>
                        <svg width="10" height="10" viewBox="0 0 10 10"><circle cx="5" cy="5" r="3" stroke="#c8c8c8" strokeWidth="2" fill="none" /><path d="M5 0 V10 M0 5 H10 M1.5 1.5 L8.5 8.5 M8.5 1.5 L1.5 8.5" stroke="#c8c8c8" strokeWidth="1" /></svg>
                    </DocTabTools>
                </DocTabs>
                <ViewTabs>
                    <ViewTab $w={74} $pad={7} $gap={7}><DesignIcon />Design</ViewTab>
                    <ViewTab $w={74} $pad={3} $gap={6} $active><PreviewIcon />Preview</ViewTab>
                </ViewTabs>
                <ReportFrame>
                    <ParamBar>
                        <ParamFields>
                            <ParamLabel>sid</ParamLabel>
                            <ParamInput>1</ParamInput>
                        </ParamFields>
                        <ViewReportButton>View Report</ViewReportButton>
                    </ParamBar>
                    <Splitter>
                        <SplitterHandle><svg width="8" height="4" viewBox="0 0 8 4"><path d="M0 4 L4 0 L8 4Z" fill="#eee" /></svg></SplitterHandle>
                    </Splitter>
                    <BlueBar>
                        <Slot $w={11}><ReportNav dir="l" last /></Slot>
                        <Slot $w={11} $ml={12}><ReportNav dir="l" /></Slot>
                        <PageBox $w={40} $ml={9}>1</PageBox>
                        <ToolText $ml={4} $tone="#dbe7f8">of</ToolText>
                        <ToolText $ml={8} $tone="#dbe7f8">1</ToolText>
                        <Slot $w={11} $ml={10}><ReportNav dir="r" /></Slot>
                        <Slot $w={11} $ml={10}><ReportNav dir="r" last /></Slot>
                        <Slot $w={1} $ml={12}><BlueDivider /></Slot>
                        <Slot $w={10} $ml={8}><svg width="7" height="6" viewBox="0 0 7 6"><path d="M0 3 L3 0 V2 H7 V4 H3 V6Z" fill="#8fb4ea" /></svg></Slot>
                        <Slot $w={16} $ml={8}><StopButton /></Slot>
                        <Slot $w={16} $ml={7}><RefreshButton /></Slot>
                        <Slot $w={1} $ml={8}><BlueDivider /></Slot>
                        <Slot $w={17} $ml={3}><PrintButton /></Slot>
                        <Slot $w={16} $ml={6}><PageLayout /></Slot>
                        <Slot $w={16} $ml={7}><PageSetup /></Slot>
                        <Slot $w={15} $ml={7}><ExportDisk /></Slot>
                        <Slot $w={8} $ml={1}><Caret color="#111" /></Slot>
                        <Slot $w={1} $ml={9}><BlueDivider /></Slot>
                        <PageBox $w={110} $ml={8}>100%<ZoomArrow><Caret color="#111" /></ZoomArrow></PageBox>
                        <PageBox $w={75} $ml={11} />
                    </BlueBar>
                    <ReportContent>
                        <ReportTitle>Grade</ReportTitle>
                        <HeaderRow>
                            <span>St Fname</span>
                            <span>St Lname</span>
                            <span>Crs Name</span>
                            <span>Grade</span>
                        </HeaderRow>
                        {GRADES.map(([course, grade]) => (
                            <DataLine key={course}>
                                <DataCells>
                                    <span>Ahmed</span>
                                    <span>Hassan</span>
                                    <span>{course}</span>
                                    <GradeCell>{grade}</GradeCell>
                                </DataCells>
                                <StatusDot />
                            </DataLine>
                        ))}
                    </ReportContent>
                </ReportFrame>
                <ErrorPanel>
                    <PanelTitle $left={2}>Error List<PanelControls /></PanelTitle>
                    <ErrorFilters>
                        <ScopeBox>Entire Solution</ScopeBox>
                        <ChipDivider $ml={5} />
                        <FilterChip $w={70} $ml={4} $on><svg width="14" height="14"><circle cx="7" cy="7" r="7" fill="#e0464f" /></svg>0 Errors</FilterChip>
                        <ChipDivider $ml={3} />
                        <FilterChip $w={96} $ml={4} $on><svg width="14" height="14" viewBox="0 0 14 14"><path d="M7 1 L14 14 H0Z" fill="#f2c94c" /></svg>12 Warnings</FilterChip>
                        <ChipDivider $ml={4} />
                        <FilterChip $w={81} $ml={6}><svg width="14" height="14"><circle cx="7" cy="7" r="7" fill="#3fa0ee" /></svg>0 Messages</FilterChip>
                        <ChipDivider $ml={9} />
                        <FilterChip $w={22} $ml={4} $on><svg width="10" height="10"><circle cx="5" cy="5" r="4" fill="none" stroke="#e0464f" strokeWidth="2" /></svg>7</FilterChip>
                        <ChipDivider $ml={3} />
                    </ErrorFilters>
                </ErrorPanel>
                <BottomTabs>
                    <BottomTab $w={57} $active>Error List</BottomTab>
                    <BottomTab $w={38} $ml={6}>Output</BottomTab>
                </BottomTabs>
            </CenterColumn>

            <ToolPanel $w={347} $ml={8}>
                <PanelBody>
                    <PanelTitle $left={3}>Solution Explorer<PanelControls /></PanelTitle>
                    <SolutionToolbar>
                        <Slot $w={22}><VsProjectIcon /></Slot>
                        <Slot $w={8}><Separator /></Slot>
                        <Slot $w={20} $ml={2}><HistoryIcon /></Slot>
                        <Slot $w={14}><Caret /></Slot>
                        <Slot $w={20}><SyncIcon /></Slot>
                        <Slot $w={22}><CollapseAll /></Slot>
                        <Slot $w={22}><CopyStack /></Slot>
                        <Slot $w={12}><Separator /></Slot>
                        <Slot $w={20}><Wrench /></Slot>
                        <ActiveTool><PreviewTool /></ActiveTool>
                    </SolutionToolbar>
                    <SolutionSearch>
                        Search Solution Explorer (Ctrl+;)
                        <PanelActions>
                            <Magnifier size={14} />
                            <Caret />
                        </PanelActions>
                    </SolutionSearch>
                    <TreeList $top={1}>
                        <SolutionRow $indent={13}>
                            <SolutionIcon />
                            <RowLabel>Solution 'Report Project2' (1 of 1 project)</RowLabel>
                        </SolutionRow>
                        <SolutionRow $indent={4}>
                            <ArrowSlot><Collapse /></ArrowSlot>
                            <Slot $w={20} $ml={8}><ProjectIcon /></Slot>
                            <RowLabel $bold $ml={2}>Report Project2</RowLabel>
                        </SolutionRow>
                        <SolutionRow $indent={22}>
                            <ArrowSlot><Expand /></ArrowSlot>
                            <Slot $w={14} $ml={11}><Folder color="#dcb67a" /></Slot>
                            <RowLabel>Shared Data Sources</RowLabel>
                        </SolutionRow>
                        <SolutionRow $indent={51}>
                            <Slot $w={14}><Folder color="#dcb67a" /></Slot>
                            <RowLabel>Shared Datasets</RowLabel>
                        </SolutionRow>
                        <SolutionRow $indent={22}>
                            <ArrowSlot><Collapse /></ArrowSlot>
                            <Slot $w={14} $ml={11}><Folder color="#dcb67a" open /></Slot>
                            <RowLabel>Reports</RowLabel>
                        </SolutionRow>
                        {REPORT_FILES.map(file => (
                            <SolutionRow key={file} $indent={69} $selected={file === 'Students.rdl'}>
                                <ReportFile />
                                <RowLabel>{file}</RowLabel>
                            </SolutionRow>
                        ))}
                    </TreeList>
                </PanelBody>
                <BottomTabs>
                    <BottomTab $w={100} $active>Solution Explorer</BottomTab>
                    <BottomTab $w={64} $ml={7}>Git Changes</BottomTab>
                </BottomTabs>
            </ToolPanel>
        </Main>

        <StatusBar>
            <svg width="16" height="16" viewBox="0 0 16 16"><path d="M0.5 1.5 H15.5 V13 H10 L8 15 L6 13 H0.5Z" stroke="#cfcfcf" fill="none" /></svg>
            <StatusText $ml={8} $w={991}>Ready</StatusText>
            <Slot $w={14}><svg width="11" height="13" viewBox="0 0 11 13"><path d="M5.5 13 V1 M1 5.5 L5.5 1 L10 5.5" stroke="#e0e0e0" fill="none" /></svg></Slot>
            <StatusText $ml={8}>Add to Source Control</StatusText>
            <Slot $w={12} $ml={4}><Caret up color="#e8e8e8" /></Slot>
            <Slot $w={16} $ml={20}><svg width="14" height="14" viewBox="0 0 14 14"><path d="M0 1 H14 M1.5 3.5 V13.5 H12.5 V3.5 M0 3.5 H14 M5 6 V9 H9 V6" stroke="#e0e0e0" fill="none" /></svg></Slot>
            <StatusText $ml={6}>Select Repository</StatusText>
            <Slot $w={12} $ml={4}><Caret up color="#e8e8e8" /></Slot>
            <Slot $w={16} $ml={16}><svg width="13" height="15" viewBox="0 0 13 15"><path d="M1 11 C2.5 9 2 7 2.5 4.5 C3 2 5 1 6.5 1 C8 1 10 2 10.5 4.5 C11 7 10.5 9 12 11Z M5 12.5 C5.5 14 7.5 14 8 12.5" stroke="#e0e0e0" fill="none" /></svg></Slot>
        </StatusBar>

        <TaskBar>
            <TaskButton $w={45}><WinLogo /></TaskButton>
            <TaskButton $w={51}><Magnifier size={22} color="#f0f0f0" /></TaskButton>
            <TaskButton $w={51} $nudge={4}><TaskView /></TaskButton>
            <TaskButton $w={49}><EdgeIcon /></TaskButton>
            <TaskButton $w={49} $open><ExplorerIcon /></TaskButton>
            <TaskButton $w={49}><StoreIcon /></TaskButton>
            <TaskButton $w={49}><MailIcon /></TaskButton>
            <TaskButton $w={49} $open><ChromeIcon /></TaskButton>
            <TaskButton $w={49} $open><WordIcon /></TaskButton>
            <TaskButton $w={49} $open><VlcIcon /></TaskButton>
            <TaskButton $w={49} $open><VsIcon /></TaskButton>
            <TaskButton $w={49} $open><ToolIcon /></TaskButton>
            <TaskButton $w={49} $open $active><SnipIcon /></TaskButton>
            <Weather>
                <Moon />
                <WeatherText $ml={9}>35°C</WeatherText>
                <WeatherText $ml={10} $arabic>سماء صافية</WeatherText>
            </Weather>
            <Slot $w={12} $ml={13}><svg width="12" height="7" viewBox="0 0 12 7"><path d="M0.5 6.5 L6 1 L11.5 6.5" stroke="#eee" fill="none" /></svg></Slot>
            <Slot $w={24} $ml={5}><svg width="12" height="16" viewBox="0 0 12 16"><path d="M2 3 H9 V12 H2Z M9 6 L11.5 4.5 V10.5 L9 9 M3 1 H8 M3 14.5 H8" stroke="#eee" fill="none" /></svg></Slot>
            <Slot $w={24}><svg width="15" height="8" viewBox="0 0 15 8"><rect x="0.5" y="0.5" width="13" height="7" stroke="#eee" fill="none" /><rect x="2" y="2" width="9" height="4" fill="#eee" /><rect x="14" y="2.5" width="1" height="3" fill="#eee" /></svg></Slot>
            <Slot $w={24}><svg width="16" height="16" viewBox="0 0 16 16"><circle cx="8" cy="8" r="7.3" stroke="#eee" fill="none" /><ellipse cx="8" cy="8" rx="3.5" ry="7.3" stroke="#eee" fill="none" /><path d="M1 5.5 H15 M1 10.5 H15" stroke="#eee" /><circle cx="12.5" cy="12.5" r="3" fill="#1b1a2b" stroke="#eee" /></svg></Slot>
            <Slot $w={24} $ml={2}><svg width="16" height="13" viewBox="0 0 16 13"><path d="M0.5 4.5 H3 L7 1 V12 L3 8.5 H0.5Z M9.5 4 C10.5 5.5 10.5 7.5 9.5 9 M12 2.5 C13.5 5 13.5 8 12 10.5" stroke="#eee" fill="none" /></svg></Slot>
            <Slot $w={30} $ml={1}>ENG</Slot>
            <TrayClock>7:45 AM<br />8/14/2024</TrayClock>
            <Slot $w={24} $ml={10}><NotifyIcon /></Slot>
        </TaskBar>
    </Page>
);

export default App;
